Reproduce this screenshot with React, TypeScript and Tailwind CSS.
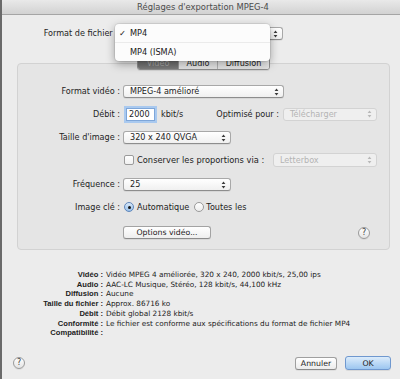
import React from "react";

function Stepper({ color = "#333" }: { color?: string }) {
  return (
    <svg width="5" height="8" viewBox="0 0 5 8" className="shrink-0">
      <path d="M2.5 0.6 L4.4 3 H0.6 Z" fill={color} />
      <path d="M0.6 5 H4.4 L2.5 7.4 Z" fill={color} />
    </svg>
  );
}

function Popup({
  text,
  className,
  disabled,
}: {
  text: string;
  className: string;
  disabled?: boolean;
}) {
  return (
    <div
      className={
        "flex items-center justify-between rounded-[3px] border pl-[6px] pr-[4px] shrink-0 " +
        (disabled
          ? "border-[#d3d3d3] bg-[#efefef] text-[#b4b4b4] "
          : "border-[#a8a8a8] border-b-[#8d8d8d] bg-linear-to-b from-white to-[#f0f0f0] text-[#1d1d1d] shadow-[0_1px_0_rgba(0,0,0,0.06)] ") +
        className
      }
    >
      <span>{text}</span>
      <Stepper color={disabled ? "#b8b8b8" : "#3a3a3a"} />
    </div>
  );
}

function Radio({ on }: { on?: boolean }) {
  return on ? (
    <div className="w-[10px] h-[10px] shrink-0 rounded-full border border-[#5f86bb] bg-linear-to-b from-[#d8e8f8] to-[#98c0ea] flex items-center justify-center">
      <div className="w-[3px] h-[3px] rounded-full bg-[#151515]" />
    </div>
  ) : (
    <div className="w-[10px] h-[10px] shrink-0 rounded-full border border-[#9a9a9a] bg-linear-to-b from-white to-[#ededed]" />
  );
}

function Help() {
  return (
    <div className="w-[12px] h-[12px] shrink-0 rounded-full border border-[#9a9a9a] bg-linear-to-b from-white to-[#e4e4e4] flex items-center justify-center text-[8px] text-[#3c3c3c] shadow-[0_1px_0_rgba(0,0,0,0.06)]">
      ?
    </div>
  );
}

const info: [string, string][] = [
  ["Vidéo :", "Vidéo MPEG 4 améliorée, 320 x 240, 2000 kbit/s, 25,00 ips"],
  ["Audio :", "AAC-LC Musique, Stéréo, 128 kbit/s, 44,100 kHz"],
  ["Diffusion :", "Aucune"],
  ["Taille du fichier :", "Approx. 86716 ko"],
  ["Débit :", "Débit global 2128 kbit/s"],
  ["Conformité :", "Le fichier est conforme aux spécifications du format de fichier MP4"],
  ["Compatibilité :", ""],
];

export default function App() {
  return (
    <div className="relative w-[400px] h-[379px] overflow-hidden bg-[#ececec] border-l-2 border-[#6a6a6a] font-['DejaVu_Sans',sans-serif] text-[8.1px] leading-none text-[#1d1d1d] flex flex-col">
      {/* Title bar */}
      <div className="h-[15px] shrink-0 flex items-center justify-center pl-[4px] bg-linear-to-b from-[#e9e9e9] to-[#d2d2d2] border-b border-[#a5a5a5] text-[8.4px] text-[#4b4b4b]">
        Réglages d'exportation MPEG-4
      </div>

      {/* Format de fichier */}
      <div className="mt-[12px] h-[13px] flex items-center shrink-0">
        <div className="w-[118px] text-right pr-[2px]">Format de fichier :</div>
        <Popup className="ml-[3px] w-[160px] h-[13px]" text="MP4" />
      </div>

      {/* Tabs */}
      <div className="mt-[17px] ml-[15px] w-[373px] flex justify-center relative z-10 shrink-0">
        <div className="flex h-[13px] rounded-[3px] border border-[#8f8f8f] overflow-hidden shadow-[0_1px_0_rgba(0,0,0,0.08)]">
          <div className="w-[40px] flex items-center justify-center bg-linear-to-b from-[#6a6a6a] to-[#7c7c7c] text-[#a8a8a8]">
            Vidéo
          </div>
          <div className="w-[39px] flex items-center justify-center bg-linear-to-b from-[#f6f6f6] to-[#e4e4e4] border-l border-[#9a9a9a]">
            Audio
          </div>
          <div className="w-[52px] flex items-center justify-center bg-linear-to-b from-[#f6f6f6] to-[#e4e4e4] border-l border-[#b4b4b4]">
            Diffusion
          </div>
        </div>
      </div>

      {/* Group box */}
      <div className="-mt-[7px] ml-[15px] w-[373px] h-[187px] shrink-0 rounded-[4px] border border-[#d2d2d2] bg-[#e5e5e5] flex flex-col pt-[21px]">
        {/* Format vidéo */}
        <div className="h-[13px] flex items-center">
          <div className="w-[102px] text-right">Format vidéo :</div>
          <Popup className="ml-[3px] w-[161px] h-[13px]" text="MPEG-4 amélioré" />
        </div>

        {/* Débit */}
        <div className="mt-[8px] h-[16px] flex items-center pr-[12px]">
          <div className="w-[102px] text-right">Débit :</div>
          <div className="ml-[6px] w-[29px] h-[13px] bg-white border border-[#7ea6d9] shadow-[0_0_0_2px_#a9c9ef] flex items-center pl-[2px]">
            2000
          </div>
          <div className="ml-[6px]">kbit/s</div>
          <div className="ml-auto">Optimisé pour :</div>
          <Popup disabled className="ml-[4px] w-[94px] h-[13px]" text="Télécharger" />
        </div>

        {/* Taille d'image */}
        <div className="mt-[9px] h-[13px] flex items-center">
          <div className="w-[102px] text-right">Taille d'image :</div>
          <Popup className="ml-[3px] w-[108px] h-[13px]" text="320 x 240 QVGA" />
        </div>

        {/* Conserver */}
        <div className="mt-[9px] h-[14px] flex items-center pr-[12px]">
          <div className="w-[106px]" />
          <div className="w-[10px] h-[10px] shrink-0 rounded-[2px] border border-[#9b9b9b] bg-linear-to-b from-white to-[#f0f0f0]" />
          <div className="ml-[3px] text-[8.3px]">Conserver les proportions via :</div>
          <Popup disabled className="ml-auto w-[104px] h-[14px]" text="Letterbox" />
        </div>

        {/* Fréquence */}
        <div className="mt-[11px] h-[13px] flex items-center">
          <div className="w-[102px] text-right">Fréquence :</div>
          <Popup className="ml-[3px] w-[108px] h-[13px]" text="25" />
        </div>

        {/* Image clé */}
        <div className="mt-[10px] h-[12px] flex items-center">
          <div className="w-[102px] text-right">Image clé :</div>
          <div className="ml-[4px]">
            <Radio on />
          </div>
          <div className="ml-[3px]">Automatique</div>
          <div className="ml-[5px]">
            <Radio />
          </div>
          <div className="ml-[2px]">Toutes les</div>
        </div>

        {/* Options vidéo */}
        <div className="mt-[13px] h-[13px] flex items-center pr-[19px]">
          <div className="w-[105px]" />
          <div className="w-[88px] h-[13px] rounded-[3px] border border-[#a3a3a3] border-b-[#8c8c8c] bg-linear-to-b from-white to-[#eeeeee] flex items-center justify-center text-[7.8px] shadow-[0_1px_0_rgba(0,0,0,0.06)]">
            Options vidéo...
          </div>
          <div className="ml-auto">
            <Help />
          </div>
        </div>
      </div>

      {/* Info */}
      <div className="mt-[20px] grid grid-cols-[101px_1fr] gap-x-[3px] text-[7.3px] leading-[9.7px] shrink-0">
        {info.map(([k, v]) => (
          <React.Fragment key={k}>
            <div className="text-right font-['Liberation_Sans',Arial,sans-serif] font-bold text-[7.6px] text-[#222]">
              {k}
            </div>
            <div className="text-[#222] whitespace-nowrap">{v}</div>
          </React.Fragment>
        ))}
      </div>

      {/* Bottom buttons */}
      <div className="mt-[19px] h-[13px] flex items-center pl-[11px] pr-[9px] shrink-0">
        <Help />
        <div className="ml-auto w-[42px] h-[13px] rounded-[3px] border border-[#9f9f9f] border-b-[#8a8a8a] bg-linear-to-b from-white to-[#ececec] flex items-center justify-center text-[7.8px] shadow-[0_1px_0_rgba(0,0,0,0.06)]">
          Annuler
        </div>
        <div className="ml-[8px] w-[46px] h-[14px] rounded-[3px] border border-[#6f98cf] bg-linear-to-b from-[#dcecfb] to-[#9cc6f0] flex items-center justify-center text-[7.8px] shadow-[0_1px_0_rgba(0,0,0,0.08)]">
          OK
        </div>
      </div>

      {/* Popup menu overlay */}
      <div className="absolute left-[113px] top-[24px] w-[155px] h-[37px] z-20 rounded-[4px] bg-[#fcfcfc] shadow-[0_3px_10px_rgba(0,0,0,0.35),0_0_0_1px_rgba(0,0,0,0.07)] text-[8.2px] text-[#1a1a1a] flex flex-col">
        <div className="h-[19px] flex items-center border-b border-[#ebebeb]">
          <span className="w-[15px] pl-[4px]">✓</span>
          <span>MP4</span>
        </div>
        <div className="h-[18px] flex items-center pl-[15px]">MP4 (ISMA)</div>
      </div>
    </div>
  );
}
